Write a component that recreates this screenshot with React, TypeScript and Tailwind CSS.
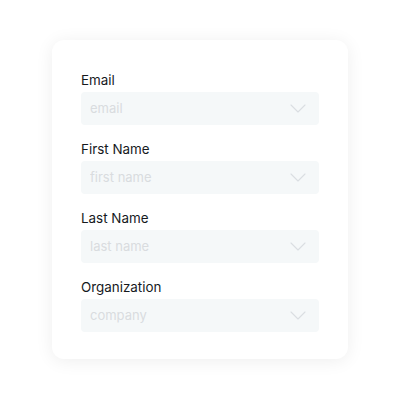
import { useState } from 'react';

const FIELDS = [
  { label: 'Email', placeholder: 'email' },
  { label: 'First Name', placeholder: 'first name' },
  { label: 'Last Name', placeholder: 'last name' },
  { label: 'Organization', placeholder: 'company' },
];

function Chevron() {
  return (
    <svg width="16" height="9" viewBox="0 0 16 9" fill="none" className="shrink-0">
      <path d="M1 1l7 7 7-7" stroke="#dadee2" strokeWidth="1.1" strokeLinecap="round" strokeLinejoin="round" />
    </svg>
  );
}

export default function App() {
  const [values, setValues] = useState<Record<string, string>>({});

  return (
    <div className="min-h-[400px] bg-white pt-[40px] pl-[52px] font-['Inter',sans-serif]">
      <div className="w-[296px] rounded-xl bg-white px-[29px] pt-[30px] pb-[27px] shadow-[0_2px_18px_rgba(0,0,0,0.07)]">
        <div className="flex flex-col gap-[14px]">
          {FIELDS.map((f) => (
            <div key={f.label} className="flex flex-col gap-[2px]">
              <label className="text-[13.4px] leading-5 text-[#16191d]">{f.label}</label>
              <div className="flex h-[33px] items-center rounded bg-[#f5f8f9] pl-[9px] pr-[13px]">
                <input
                  value={values[f.label] ?? ''}
                  onChange={(e) => setValues({ ...values, [f.label]: e.target.value })}
                  placeholder={f.placeholder}
                  className="min-w-0 flex-1 bg-transparent text-[13px] text-[#333] outline-none placeholder:text-[#d9dcdf]"
                />
                <Chevron />
              </div>
            </div>
          ))}
        </div>
      </div>
    </div>
  );
}
